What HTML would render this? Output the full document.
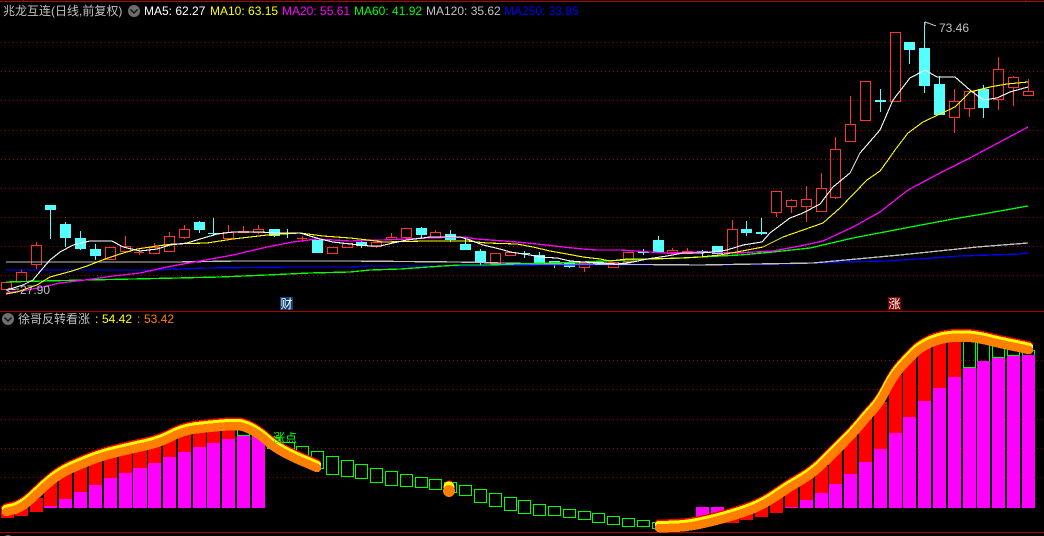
<!DOCTYPE html>
<html><head><meta charset="utf-8"><style>
html,body{margin:0;padding:0;background:#000;width:1044px;height:536px;overflow:hidden}
svg{display:block}
text{font-family:"Liberation Sans","Noto Sans CJK SC",sans-serif;font-size:12px}
.c{shape-rendering:crispEdges}
.m{fill:none;stroke-width:1.3;shape-rendering:crispEdges}
.n{fill:none;stroke-width:1.1;shape-rendering:crispEdges}
.t{fill:none;stroke-width:8.5;stroke-linecap:round;stroke-linejoin:round;shape-rendering:crispEdges}
</style></head><body>
<svg width="1044" height="536" viewBox="0 0 1044 536" xmlns="http://www.w3.org/2000/svg">
<rect width="1044" height="536" fill="#000"/>
<g class="c" stroke="#a00000" fill="none">
<path d="M0 1.5H1044M23.5 0V1M1025.5 0V1M0 311.5H1044M0 532.5H1044" stroke="#b00000"/>
<path stroke-dasharray="1 3" d="M1 42.5H1044M1 71.5H1044M1 100.5H1044M1 130.5H1044M1 159.5H1044M1 188.5H1044M1 217.5H1044M1 246.5H1044M1 275.5H1044M1 360.5H1044M1 389.5H1044M1 419.5H1044M1 448.5H1044M1 477.5H1044"/>
</g>

<!-- red candles -->
<path class="c" fill="none" stroke="#ff3232" d="M1.5 282.5h10V289.5h-10z
M16.5 272.5h10V281.5h-10zM21.5 269V272
M31.5 245.5h10V264.5h-10zM36.5 242V245M36.5 265V269
M105.5 247.5h10V259.5h-10z
M120.5 246.5h10V251.5h-10zM125.5 236V246
M134 252.5h10M139.5 248V255
M149.5 247.5h10V253.5h-10zM154.5 243V247
M164.5 236.5h10V251.5h-10zM169.5 232V236
M179.5 229.5h10V237.5h-10zM184.5 225V229M184.5 238V239
M223.5 232.5h10V238.5h-10zM228.5 225V232
M238.5 231.5h10V232.5h-10zM243.5 226V231
M253.5 229.5h10V232.5h-10zM258.5 225V229M258.5 233V234
M297 238.5h10M302.5 236V242
M327.5 247.5h10V253.5h-10z
M342.5 243.5h10V247.5h-10z
M371.5 242.5h10V246.5h-10zM376.5 247V248
M386.5 237.5h10V239.5h-10zM391.5 233V237
M401.5 228.5h10V237.5h-10zM406.5 238V240
M430.5 232.5h10V237.5h-10zM435.5 230V232
M490.5 253.5h10V263.5h-10z
M505.5 252.5h10V255.5h-10z
M579.5 262.5h10V267.5h-10zM584.5 268V272
M608.5 262.5h10V267.5h-10z
M623.5 252.5h10V261.5h-10z
M667.5 250.5h10V253.5h-10zM672.5 248V250
M682.5 251.5h10V253.5h-10zM687.5 248V251
M727.5 229.5h10V255.5h-10zM732.5 220V229
M771.5 191.5h10V212.5h-10zM776.5 213V217
M786.5 200.5h10V206.5h-10zM791.5 199V200M791.5 207V213
M801.5 199.5h10V206.5h-10zM806.5 186V199M806.5 207V222
M816.5 188.5h10V211.5h-10zM821.5 173V188
M830.5 149.5h10V197.5h-10zM835.5 137V149M835.5 198V199
M845.5 124.5h10V141.5h-10zM850.5 96V124
M860.5 81.5h10V120.5h-10z
M890.5 32.5h10V101.5h-10z
M949.5 101.5h10V117.5h-10zM954.5 89V101M954.5 118V133
M964.5 91.5h10V108.5h-10zM969.5 109V117
M993.5 69.5h10V99.5h-10zM998.5 57V69M998.5 100V110
M1008.5 77.5h10V87.5h-10zM1013.5 76V77M1013.5 88V106
M1023.5 91.5h10V95.5h-10zM1028.5 79V91"/>

<!-- cyan candles -->
<path class="c" fill="#55ffff" d="M45 205h11v5H45zM60 224h11v14H60zM75 238h11v11H75zM90 249h11v7H90zM194 222h11v8h-11zM269 229h11v7h-11zM312 240h11v13h-11zM356 242h11v4h-11zM416 228h11v7h-11zM445 234h11v6h-11zM460 244h11v6h-11zM475 251h11v11h-11zM534 255h11v8h-11zM549 261h11v4h-11zM564 262h11v5h-11zM593 262h11v3h-11zM653 240h11v12h-11zM697 251h11v2h-11zM712 246h11v8h-11zM741 229h11v4h-11zM756 232h11v2h-11zM875 100h11v2h-11zM904 42h11v8h-11zM919 48h11v38h-11zM934 84h11v31h-11zM978 89h11v19h-11z"/>
<path class="c" fill="none" stroke="#55ffff" d="M50.5 210V239M65.5 222V247M80.5 231V250M95.5 244V260M199.5 221V233M208 233.5h11M213.5 218V236M274.5 229V237M282 233.5h11M287.5 229V238M318.5 240V241M361.5 240V248M421.5 227V238M450.5 230V242M465.5 238V244M480.5 249V265M518 253.5h12M524.5 251V258M539.5 252V255M554.5 265V268M569.5 260V268M638 252.5h11M643.5 249V255M658.5 236V253M702.5 250V256M746.5 221V236M761.5 218V235M880.5 89V112M909.5 50V64M924.5 22V93M939.5 76V84M983.5 85V118"/>

<!-- lower panel green hollow bars -->
<path class="c" fill="none" stroke="#00ff00" d="M237.5 425.5h12V435.5h-12zM267.5 437.5h12V448.5h-12zM282.5 442.5h12V452.5h-12zM296.5 446.5h12V460.5h-12zM311.5 451.5h12V468.5h-12zM326.5 456.5h12V474.5h-12zM341.5 460.5h12V476.5h-12zM355.5 464.5h12V478.5h-12zM370.5 468.5h12V482.5h-12zM385.5 471.5h12V485.5h-12zM400.5 474.5h12V486.5h-12zM415.5 477.5h12V487.5h-12zM429.5 479.5h12V489.5h-12zM444.5 482.5h12V492.5h-12zM459.5 485.5h12V495.5h-12zM474.5 489.5h12V502.5h-12zM489.5 493.5h12V506.5h-12zM504.5 497.5h12V510.5h-12zM518.5 500.5h12V513.5h-12zM533.5 504.5h12V515.5h-12zM548.5 506.5h12V515.5h-12zM563.5 509.5h12V517.5h-12zM578.5 511.5h12V519.5h-12zM592.5 513.5h12V522.5h-12zM607.5 516.5h12V524.5h-12zM622.5 518.5h12V526.5h-12zM637.5 520.5h12V526.5h-12zM652.5 522.5h12V528.5h-12zM963.5 340.5h12V367.5h-12zM977.5 340.5h12V361.5h-12zM992.5 342.5h12V357.5h-12zM1007.5 345.5h12V355.5h-12zM1022.5 350.5h12V355.5h-12z"/>

<!-- red bars -->
<path class="c" fill="#ff0000" d="M1 506h13v12H1zM15 505h13v11H15zM30 498h13v14H30zM44 482h13v24H44zM59 472h13v27H59zM74 465h13v27H74zM89 459h13v26H89zM104 454h13v24h-13zM119 451h13v22h-13zM133 447h14v21h-14zM148 444h13v19h-13zM163 438h13v19h-13zM178 431h13v21h-13zM193 429h13v18h-13zM207 427h13v16h-13zM222 426h13v13h-13zM726 515h13v8h-13zM740 512h13v8h-13zM755 505h13v12h-13zM770 497h13v16h-13zM785 486h13v21h-13zM800 478h13v22h-13zM815 466h13v27h-13zM829 452h13v32h-13zM844 436h13v38h-13zM859 418h13v44h-13zM874 402h13v47h-13zM889 375h13v58h-13zM903 358h13v59h-13zM918 346h13v55h-13zM933 339h13v49h-13zM948 337h13v40h-13z"/>
<!-- magenta bars -->
<path class="c" fill="#ff00ff" d="M44 506h13v2H44zM59 499h13v9H59zM74 492h13v16H74zM89 485h13v23H89zM104 478h13v30h-13zM119 473h13v35h-13zM133 468h14v40h-14zM148 463h13v45h-13zM163 457h13v51h-13zM178 452h13v56h-13zM193 447h13v61h-13zM207 443h13v65h-13zM222 439h13v69h-13zM237 436h13v72h-13zM252 436h13v72h-13zM696 507h13v10h-13zM711 507h13v8h-13zM785 507h13v1h-13zM800 500h13v8h-13zM815 493h13v15h-13zM829 484h13v24h-13zM844 474h13v34h-13zM859 462h13v46h-13zM874 449h13v59h-13zM889 433h13v75h-13zM903 417h13v91h-13zM918 401h13v107h-13zM933 388h13v120h-13zM948 377h13v131h-13zM963 368h13v140h-13zM977 361h13v147h-13zM992 358h13v150h-13zM1007 356h13v152h-13zM1022 355h13v153h-13z"/>

<!-- MA lines -->
<polyline class="m" stroke="#0000ff" points="6,270 58,270 153,270 207,268 293,267 350,267 370,266 450,266 547,265 700,265 783,264 843,262 887,261 933,258 960,256 1020,254 1028,253"/>
<polyline class="m" stroke="#c0c0c0" points="6,262 177,262 237,261 267,261 350,261 457,262 547,264 583,264 700,265 813,263 900,255 977,247 1028,243"/>
<polyline class="m" stroke="#00ff00" points="6,282 43,281 87,280 133,279 177,278 220,277 267,275 310,273 350,272 370,270 400,269 443,266 460,265 488,265 517,264 547,263 583,262 627,260 650,259 683,258 700,257 740,255 773,252 810,248 853,238 900,229 953,219 983,214 1028,206"/>
<polyline class="m" stroke="#ff00ff" points="6,293 27,290 43,287 60,283 93,279 113,276 140,273 167,267 200,261 233,255 267,247 293,242 317,239 350,241 383,240 427,238 463,237 477,239 517,242 537,244 563,247 583,249 597,250 620,250 650,252 667,253 700,252 737,253 773,251 800,246 823,241 853,227 880,212 908,190 940,173 968,159 1028,127"/>
<polyline class="n" stroke="#ffff00" points="6,294 17,292 37,285 50,277 72,271 87,266 105,259 120,254 137,249 157,246 173,244 207,243 233,239 267,235 300,233 323,236 350,238 368,240 383,242 427,241 467,241 487,243 517,244 533,247 550,251 567,254 583,257 600,259 610,261 627,259 650,259 680,258 700,257 720,255 737,252 763,247 783,237 823,223 840,208 867,180 880,171 888,160 895,150 908,133 923,122 940,114 955,107 970,92 990,87 1007,84 1028,82"/>
<polyline class="n" stroke="#ffffff" points="7,290 23,285 33,280 43,268 50,260 60,252 73,245 90,241 112,241 123,247 140,251 157,249 170,245 187,243 200,239 217,234 233,232 260,232 277,233 300,233 320,239 333,242 350,244 370,246 380,246 393,243 407,240 430,237 460,237 470,240 483,245 500,249 510,252 530,255 540,257 557,258 570,261 583,262 603,263 617,264 633,262 647,259 667,256 683,253 700,253 713,252 727,250 743,245 762,242 770,233 790,218 803,213 820,204 833,187 850,173 860,153 880,130 893,100 910,78 925,70 937,77 955,77 970,90 983,100 997,98 1010,92 1028,87"/>

<!-- thick curves -->
<g transform="translate(0,-4.5)">
<path class="t" stroke="#ff0000" d="M6 512L10 511Q17 510 23.5 505.5Q30 501 36.5 494.5Q43 488 51.5 481Q60 474 70 469.5Q80 465 91.5 460.5Q103 456 118 452.5Q133 449 146.5 446Q160 443 171.5 437Q183 431 195 429.5Q207 428 218.5 427Q230 426 236.5 426Q243 426 251.5 430.5Q260 435 266.5 441Q273 447 283 452.5Q293 458 305.5 463L317 468"/>
<path class="t" stroke="#ff0000" d="M659 528L668.5 528Q683 528 698 525Q713 522 730 517Q747 512 757 507.5Q767 503 778.5 495Q790 487 801.5 480.5Q813 474 825 462Q837 450 845 442Q853 434 860 425.5Q867 417 873.5 410Q880 403 886.5 390Q893 377 900 369Q907 361 913.5 354.5Q920 348 930 343.5Q940 339 951.5 338Q963 337 971.5 338Q980 339 990 341.5Q1000 344 1015 347L1029 350"/>
<circle class="c" cx="449" cy="490" r="5" fill="#ff0000"/>
</g>
<g transform="translate(0,-3)">
<path class="t" stroke="#ffff00" d="M6 512L10 511Q17 510 23.5 505.5Q30 501 36.5 494.5Q43 488 51.5 481Q60 474 70 469.5Q80 465 91.5 460.5Q103 456 118 452.5Q133 449 146.5 446Q160 443 171.5 437Q183 431 195 429.5Q207 428 218.5 427Q230 426 236.5 426Q243 426 251.5 430.5Q260 435 266.5 441Q273 447 283 452.5Q293 458 305.5 463L317 468"/>
<path class="t" stroke="#ffff00" d="M659 528L668.5 528Q683 528 698 525Q713 522 730 517Q747 512 757 507.5Q767 503 778.5 495Q790 487 801.5 480.5Q813 474 825 462Q837 450 845 442Q853 434 860 425.5Q867 417 873.5 410Q880 403 886.5 390Q893 377 900 369Q907 361 913.5 354.5Q920 348 930 343.5Q940 339 951.5 338Q963 337 971.5 338Q980 339 990 341.5Q1000 344 1015 347L1029 350"/>
<circle class="c" cx="449" cy="490" r="5.5" fill="#ffff00"/>
</g>
<path class="t" stroke="#ff8000" d="M6 512L10 511Q17 510 23.5 505.5Q30 501 36.5 494.5Q43 488 51.5 481Q60 474 70 469.5Q80 465 91.5 460.5Q103 456 118 452.5Q133 449 146.5 446Q160 443 171.5 437Q183 431 195 429.5Q207 428 218.5 427Q230 426 236.5 426Q243 426 251.5 430.5Q260 435 266.5 441Q273 447 283 452.5Q293 458 305.5 463L317 468"/>
<path class="t" stroke="#ff8000" d="M659 528L668.5 528Q683 528 698 525Q713 522 730 517Q747 512 757 507.5Q767 503 778.5 495Q790 487 801.5 480.5Q813 474 825 462Q837 450 845 442Q853 434 860 425.5Q867 417 873.5 410Q880 403 886.5 390Q893 377 900 369Q907 361 913.5 354.5Q920 348 930 343.5Q940 339 951.5 338Q963 337 971.5 338Q980 339 990 341.5Q1000 344 1015 347L1029 350"/>
<circle class="c" cx="449" cy="491" r="6" fill="#ff8000"/>

<!-- header text -->
<text x="3" y="15" fill="#c0c0c0">兆龙互连(日线,前复权)</text>
<circle cx="134" cy="11" r="6" fill="#6e6e6e"/>
<path d="M130.5 9.5L134 13L137.5 9.5" fill="none" stroke="#111" stroke-width="1.4"/>
<text x="144" y="15" fill="#ffffff">MA5: 62.27</text>
<text x="210" y="15" fill="#ffff00">MA10: 63.15</text>
<text x="282" y="15" fill="#ff00ff">MA20: 55.61</text>
<text x="354" y="15" fill="#00ff00">MA60: 41.92</text>
<text x="426" y="15" fill="#c0c0c0">MA120: 35.62</text>
<text x="504" y="15" fill="#0000ff">MA250: 33.85</text>

<!-- price labels -->
<text x="20" y="294" fill="#c0c0c0">27.90</text>
<path d="M6 290L19 289M6 290L10 288M6 290L10 292" fill="none" stroke="#c0c0c0" class="c"/>
<text x="939" y="32" fill="#c0c0c0">73.46</text>
<path d="M925 22L928 23L936 26M925 22V25" fill="none" stroke="#c0c0c0" class="c"/>

<!-- badges -->
<rect x="280" y="297" width="13" height="13" fill="#0f3f73"/>
<text x="280.5" y="308" fill="#fff">财</text>
<rect x="888" y="297" width="13" height="13" fill="#800000"/>
<text x="888.5" y="308" fill="#fff">涨</text>

<!-- lower header -->
<circle cx="8" cy="319" r="6" fill="#6e6e6e"/>
<path d="M4.5 317.5L8 321L11.5 317.5" fill="none" stroke="#111" stroke-width="1.4"/>
<text x="18" y="323" fill="#c0c0c0">徐哥反转看涨</text>
<text x="95" y="323" fill="#ffff00">:</text>
<text x="102" y="323" fill="#ffff00">54.42</text>
<text x="137" y="323" fill="#ff8000">:</text>
<text x="144" y="323" fill="#ff8000">53.42</text>
<text x="273" y="442" fill="#00ff00">涨点</text>
<circle cx="8" cy="541" r="6" fill="#6e6e6e"/>
</svg>
</body></html>
